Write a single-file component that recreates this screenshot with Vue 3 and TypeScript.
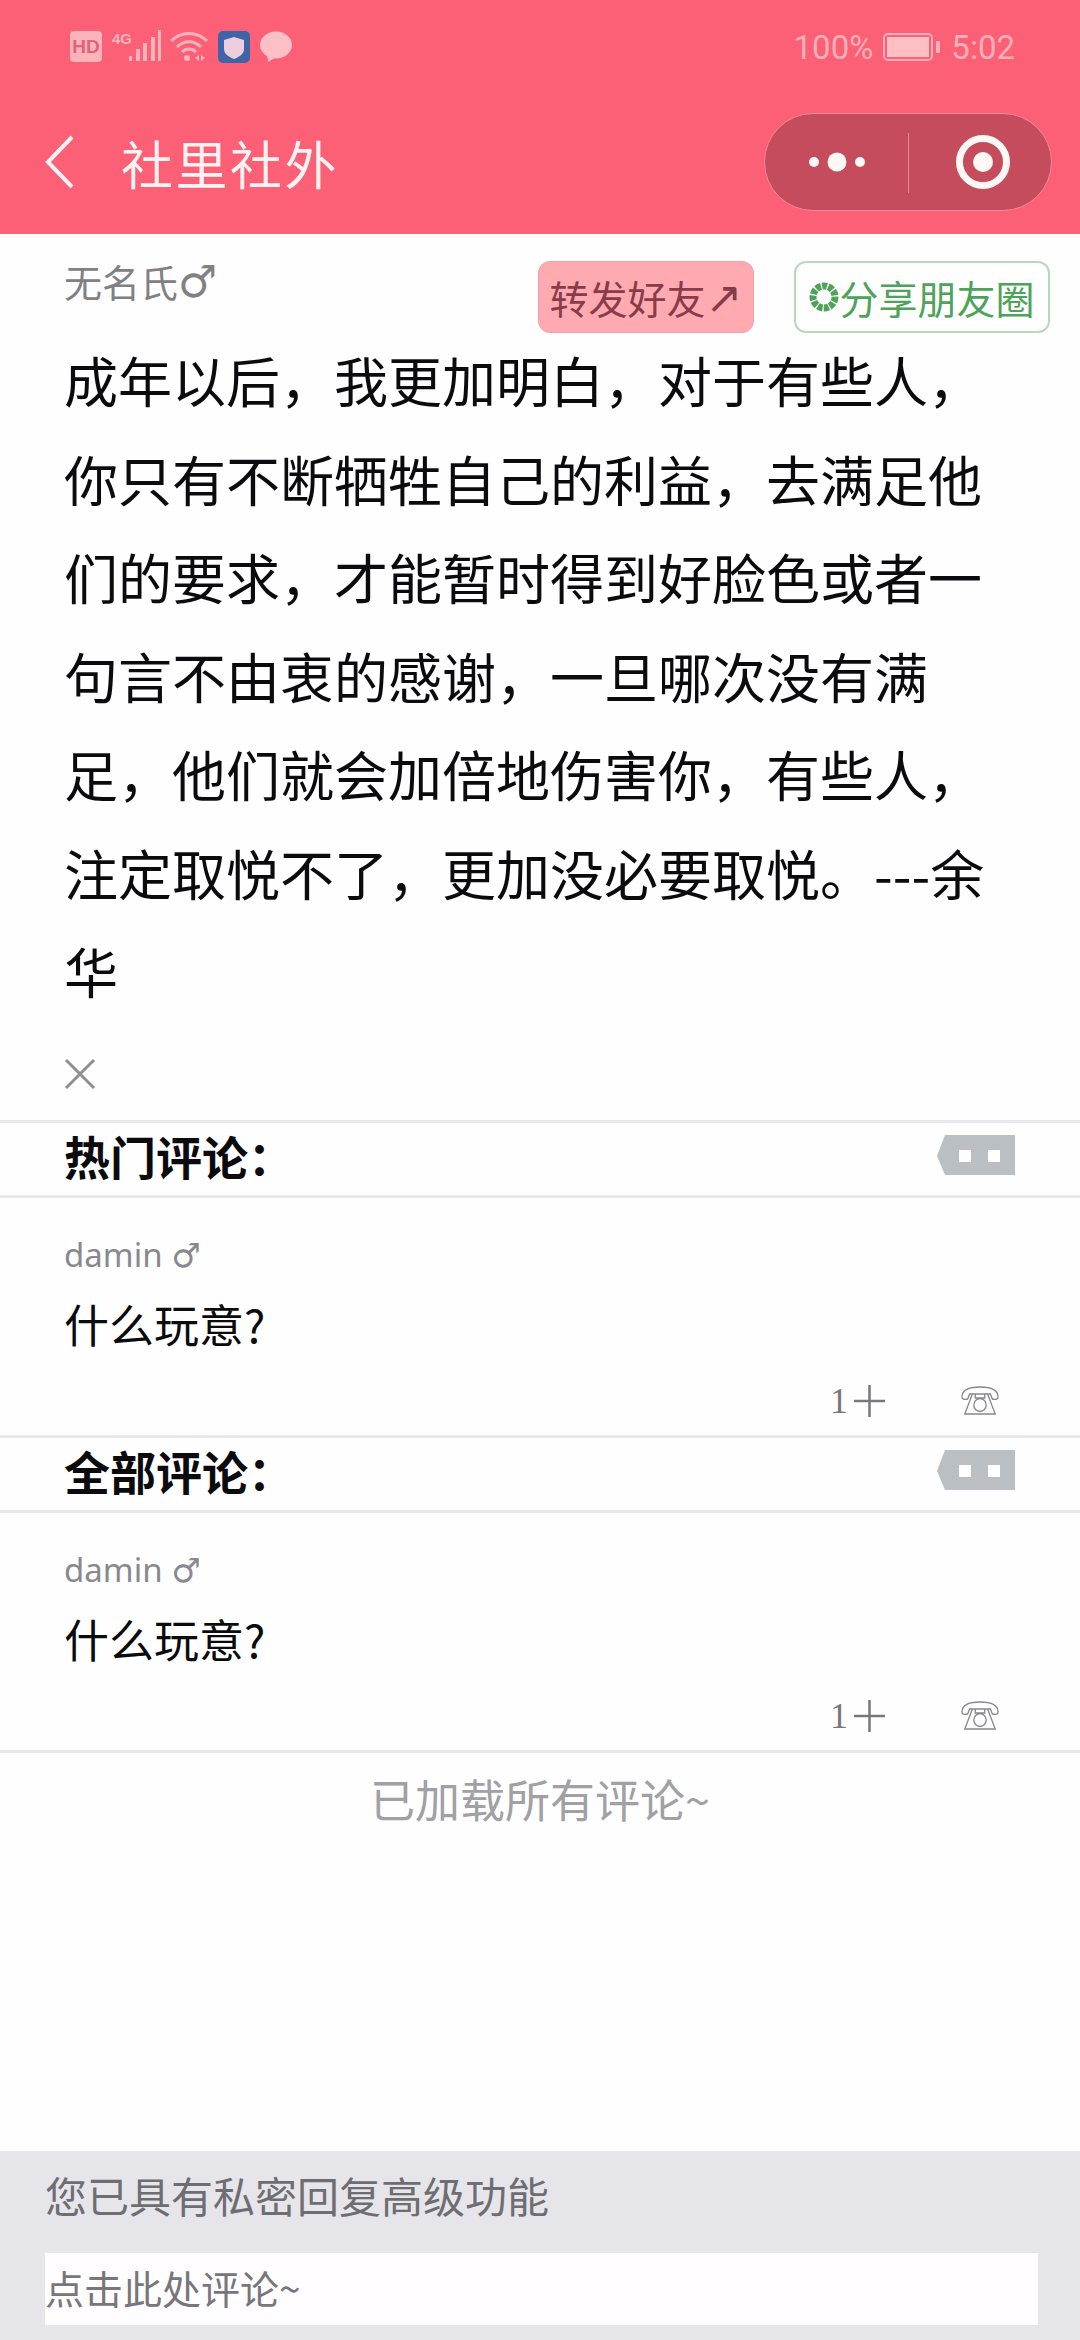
<template>
  <div class="page">
    <header class="top">
      <div class="status-bar">
        <div class="status-left">
          <svg width="132" height="34" viewBox="0 0 132 34">
            <rect x="0" y="1" width="32" height="31" rx="4" fill="#fcb4ba" />
            <text x="16" y="23" text-anchor="middle" class="hd">HD</text>
            <text x="42" y="14" class="four-g">4G</text>
            <rect x="59" y="26" width="3" height="5" fill="#fcb4ba" />
            <rect x="66" y="19" width="4" height="12" fill="#fcb4ba" />
            <rect x="73" y="13" width="4" height="18" fill="#fcb4ba" />
            <rect x="81" y="7" width="4" height="24" fill="#fcb4ba" />
            <rect x="88" y="0" width="3" height="31" fill="#fcb4ba" />
          </svg>
          <svg class="wifi" width="40" height="34" viewBox="0 0 40 34" fill="none" stroke="#fcb4ba" stroke-width="3">
            <path d="M2 11C12 1 28 1 38 11" />
            <path d="M8 17C15 10 25 10 32 17" />
            <path d="M13 22C17 18 23 18 27 22" />
            <circle cx="18" cy="28" r="3" fill="#fcb4ba" stroke="none" />
            <path d="M26 28l4-3v6zM36 28l-4-3v6z" fill="#fcb4ba" stroke="none" />
          </svg>
          <svg class="shield" width="32" height="32" viewBox="0 0 32 32">
            <rect width="32" height="32" rx="5" fill="#3f64a8" />
            <path d="M16 6l10 3v9c0 5-5 8-10 10C11 26 6 23 6 18V9z" fill="#eccfdc" />
          </svg>
          <svg width="34" height="32" viewBox="0 0 34 32">
            <ellipse cx="17" cy="14" rx="16" ry="13.5" fill="#fcc0c4" />
            <path d="M8 22l1 9 10-6z" fill="#fcc0c4" />
          </svg>
        </div>
        <div class="status-right">
          <span>100%</span>
          <span class="battery"><i></i></span>
          <span class="time">5:02</span>
        </div>
      </div>
      <div class="nav">
        <svg class="back" width="30" height="54" viewBox="0 0 30 54" fill="none" stroke="#fff2f2" stroke-width="4">
          <path d="M27 2L3 27L27 52" />
        </svg>
        <span class="nav-title">社里社外</span>
        <div class="capsule">
          <div class="capsule-side">
            <svg width="60" height="20" viewBox="0 0 60 20" fill="#fff8f4">
              <circle cx="7" cy="10" r="5" />
              <circle cx="30" cy="10" r="9.5" />
              <circle cx="53" cy="10" r="5" />
            </svg>
          </div>
          <div class="capsule-side with-line">
            <svg class="ring" width="56" height="56" viewBox="0 0 56 56">
              <circle cx="28" cy="28" r="23.5" fill="none" stroke="#fff8f4" stroke-width="7" />
              <circle cx="28" cy="28" r="10" fill="#fff8f4" />
            </svg>
          </div>
        </div>
      </div>
    </header>

    <section class="post">
      <div class="post-meta">
        <span class="author">无名氏<em>♂</em></span>
        <div class="post-actions">
          <span class="btn-forward">转发好友<em>↗</em></span>
          <span class="btn-share">
            <svg width="30" height="30" viewBox="0 0 30 30">
              <circle cx="15" cy="15" r="11" fill="none" stroke="#4ea35a" stroke-width="7" stroke-dasharray="5 1.2" />
            </svg>
            分享朋友圈
          </span>
        </div>
      </div>
      <p class="post-text">{{ postText }}</p>
      <div class="post-close">
        <svg width="32" height="32" viewBox="0 0 32 32" stroke="#8e8e93" stroke-width="3">
          <path d="M2 2L30 30M30 2L2 30" />
        </svg>
      </div>
    </section>

    <section v-for="group in groups" :key="group.title">
      <div class="group-head">
        <strong>{{ group.title }}</strong>
        <svg class="tag" width="78" height="40" viewBox="0 0 78 40">
          <path d="M8 0H78V40H8L0 21z" fill="#b9bfc2" />
          <rect x="22" y="15" width="12" height="12" fill="#fff" />
          <rect x="51" y="15" width="12" height="12" fill="#fff" />
        </svg>
      </div>
      <div class="comment">
        <div class="comment-name">damin <em>♂</em></div>
        <div class="comment-body">什么玩意?</div>
        <div class="comment-foot">
          <span class="like">1
            <svg width="31" height="32" viewBox="0 0 31 32" stroke="#77777c" stroke-width="2.5">
              <path d="M0 16H31M15.5 0V32" />
            </svg>
          </span>
          <svg class="phone" width="38" height="30" viewBox="0 0 40 30" fill="none" stroke="#88888c" stroke-width="1.4" preserveAspectRatio="none">
            <path d="M1 11C1 3 10 1 20 1S39 3 39 11C39 13 37 14 33 13L31 8H9L7 13C3 14 1 13 1 11Z" />
            <path d="M12 8L4 28H36L28 8" />
            <circle cx="20" cy="19" r="6.5" />
            <path d="M15 8V12H25V8" />
          </svg>
        </div>
      </div>
    </section>

    <div class="all-loaded">已加载所有评论~</div>

    <footer class="reply">
      <div class="reply-tip">您已具有私密回复高级功能</div>
      <div class="reply-input">点击此处评论~</div>
    </footer>
  </div>
</template>

<script setup lang="ts">
const postText =
  '成年以后，我更加明白，对于有些人，你只有不断牺牲自己的利益，去满足他们的要求，才能暂时得到好脸色或者一句言不由衷的感谢，一旦哪次没有满足，他们就会加倍地伤害你，有些人，注定取悦不了，更加没必要取悦。---余华'

const groups = [{ title: '热门评论：' }, { title: '全部评论：' }]
</script>

<style>
body {
  background: #fff;
}
</style>

<style scoped>
.page {
  width: 1080px;
  height: 2340px;
  display: flex;
  flex-direction: column;
  overflow: hidden;
  background: #fffeff;
  color: #0b0b0d;
  font-family: "Noto Sans CJK SC", "Noto Sans", sans-serif;
}

em {
  font-style: normal;
  font-family: "DejaVu Sans", sans-serif;
}

.top {
  height: 234px;
  background: #fc6076;
  flex-shrink: 0;
}

.status-bar {
  height: 94px;
  padding: 30px 65px 0 70px;
  box-sizing: border-box;
  display: flex;
  justify-content: space-between;
  align-items: flex-start;
}

.status-left {
  display: flex;
  align-items: center;
  gap: 9px;
}

.wifi {
  margin-left: -42px;
}

.hd {
  font: 700 19px "Liberation Sans", sans-serif;
  fill: #e2637a;
}

.four-g {
  font: 700 15px "Liberation Sans", sans-serif;
  fill: #fcb4ba;
}

.status-right {
  display: flex;
  align-items: center;
  height: 34px;
  color: #fcafb6;
  font: 400 33px Roboto, sans-serif;
}

.battery {
  position: relative;
  width: 50px;
  height: 28px;
  margin: 0 18px 0 10px;
  border: 2px solid #fcafb6;
  border-radius: 5px;
  box-sizing: border-box;
  padding: 2px;
}

.battery i {
  display: block;
  height: 100%;
  background: #fdbfc4;
}

.battery::after {
  content: "";
  position: absolute;
  right: -9px;
  top: 6px;
  width: 4px;
  height: 12px;
  background: #fcafb6;
}

.nav {
  height: 140px;
  padding: 13px 28px 17px 45px;
  box-sizing: border-box;
  display: flex;
  align-items: center;
}

.back {
  flex-shrink: 0;
}

.nav-title {
  margin-left: 46px;
  color: #fff3f2;
  font-size: 52px;
  letter-spacing: 2.5px;
  flex: 1;
}

.capsule {
  width: 288px;
  height: 98px;
  display: flex;
  box-sizing: border-box;
  background: #c44c5c;
  border: 1px solid #f58a95;
  border-radius: 49px;
}

.capsule-side {
  flex: 1;
  display: flex;
  align-items: center;
  justify-content: center;
  position: relative;
}

.ring {
  margin-left: 6px;
}

.capsule-side.with-line::before {
  content: "";
  position: absolute;
  left: 0;
  top: 19px;
  height: 60px;
  width: 1px;
  background: #e88592;
}

.post-meta {
  height: 97px;
  padding: 27px 30px 0 64px;
  box-sizing: border-box;
  display: flex;
  justify-content: space-between;
  align-items: flex-start;
}

.author {
  color: #808085;
  font-size: 38px;
  line-height: 40px;
}

.author em {
  font-size: 44px;
}

.post-actions {
  display: flex;
  gap: 40px;
}

.btn-forward,
.btn-share {
  height: 72px;
  box-sizing: border-box;
  display: flex;
  align-items: center;
  justify-content: center;
  font-size: 39px;
  border-radius: 12px;
  white-space: nowrap;
}

.btn-forward {
  width: 216px;
  background: #ffa9b0;
  color: #873c4b;
  border: 1px solid #f4a0a8;
}

.btn-forward em {
  font-size: 44px;
}

.btn-share {
  width: 256px;
  background: #fffeff;
  color: #4ea35a;
  border: 2px solid #b6d9b8;
}

.post-text {
  margin: 0;
  padding: 0 80px 0 64px;
  font-size: 54px;
  line-height: 98.5px;
}

.post-close {
  height: 99px;
  padding: 37px 0 0 64px;
  box-sizing: border-box;
}

.post-close svg {
  display: block;
}

.group-head {
  height: 78px;
  padding: 0 65px 8px 64px;
  box-sizing: border-box;
  display: flex;
  align-items: center;
  justify-content: space-between;
  border-top: 3px solid #e7e7ec;
  border-bottom: 3px solid #e7e7ec;
}

.group-head strong {
  font-size: 46px;
  font-weight: 700;
}

.comment {
  height: 237px;
  padding: 34px 65px 0 64px;
  box-sizing: border-box;
}

.comment-name {
  color: #88888e;
  font: 400 33px/46px "Noto Sans", sans-serif;
}

.comment-name em {
  font-size: 33px;
}

.comment-body {
  margin-top: 17px;
  font-size: 45px;
  line-height: 56px;
}

.comment-foot {
  margin-top: 28px;
  padding-right: 16px;
  display: flex;
  justify-content: flex-end;
  align-items: center;
  gap: 76px;
  color: #77777c;
}

.like {
  display: flex;
  align-items: center;
  gap: 6px;
  font: 400 36px "Liberation Serif", serif;
}

.phone {
  display: block;
}

.all-loaded {
  border-top: 3px solid #e7e7ec;
  padding-top: 16px;
  text-align: center;
  color: #a0a0a5;
  font-size: 45px;
  line-height: 60px;
}

.reply {
  margin-top: auto;
  height: 189px;
  padding: 19px 42px 15px 45px;
  box-sizing: border-box;
  background: #e6e5ea;
  flex-shrink: 0;
}

.reply-tip {
  color: #6e6d72;
  font-size: 42px;
  line-height: 50px;
  margin-bottom: 33px;
}

.reply-input {
  height: 72px;
  line-height: 69px;
  background: #fffdff;
  color: #77767b;
  font-size: 39px;
}
</style>
